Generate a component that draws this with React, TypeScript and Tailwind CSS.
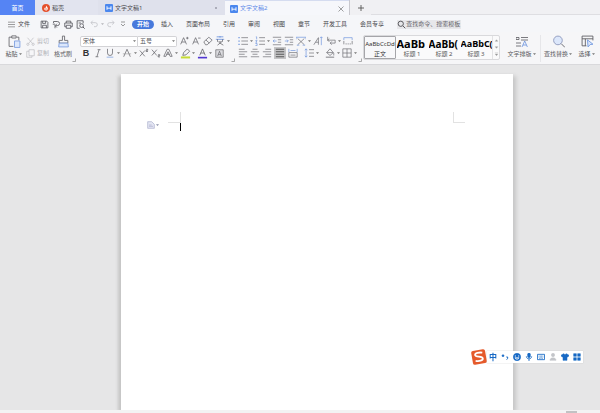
import type { ReactNode } from "react";

function Icon({ children, className = "size-[12px]" }: { children: ReactNode; className?: string }) {
  return (
    <svg
      viewBox="0 0 12 12"
      className={`block shrink-0 ${className}`}
      fill="none"
      stroke="currentColor"
      strokeWidth="0.8"
      aria-hidden="true"
    >
      {children}
    </svg>
  );
}

function Tool({ label, children, active = false }: { label: string; children: ReactNode; active?: boolean }) {
  return (
    <button
      type="button"
      aria-label={label}
      className={`flex size-[12px] shrink-0 items-center justify-center ${active ? "bg-[#c4c4c6]" : ""}`}
    >
      {children}
    </button>
  );
}

function Caret({ className = "text-[#777]" }: { className?: string }) {
  return (
    <svg viewBox="0 0 5 12" className={`block h-[12px] w-[5px] shrink-0 ${className}`} fill="currentColor" aria-hidden="true">
      <path d="M1 5.3h3L2.5 7z" />
    </svg>
  );
}

function Launcher() {
  return (
    <svg viewBox="0 0 4 4" className="block size-[4px] shrink-0 self-end text-[#888]" stroke="currentColor" strokeWidth="0.7" fill="none" aria-hidden="true">
      <path d="M0.5 3.5h3v-3" />
    </svg>
  );
}

function DocLogo() {
  return (
    <svg viewBox="0 0 8 8" className="block size-[8px] shrink-0" aria-hidden="true">
      <rect width="8" height="8" rx="1" fill="#4a87ee" />
      <path d="M2 2.2v3.6M6 2.2v3.6M2 4.2h4" stroke="#fff" strokeWidth="0.9" fill="none" />
    </svg>
  );
}

function TabBar() {
  return (
    <nav className="flex h-[15px] items-stretch bg-[#f0f0f3] text-[#4c4c50]">
      <button type="button" className="w-[35px] bg-[#5584f4] pt-px text-white">首页</button>
      <button type="button" className="flex w-[63px] items-center gap-[2px] bg-[#e2e4ef] pt-px pl-[7px]">
        <svg viewBox="0 0 8 8" className="size-[8px]" aria-hidden="true">
          <circle cx="4" cy="4" r="4" fill="#e5502c" />
          <path d="M4.2 1.4c.2 1.3 1.8 1.7 1.6 3.3-.2 2.3-3.4 2.3-3.6.1L3 3.6l.7.5z" fill="#fff" />
          <circle cx="4" cy="5" r=".7" fill="#e5502c" />
        </svg>
        稻壳
      </button>
      <button type="button" className="flex w-[127px] items-center gap-[2px] bg-[#dfe1ec] pt-px pl-[7px]">
        <DocLogo />
        文字文稿1
        <span className="mr-[8px] ml-auto size-[2px] rounded-full bg-[#9a9aa8]" />
      </button>
      <div className="flex w-[124px] items-center gap-[2px] border-t border-[#d5dcf0] bg-[#f6f7fb] pt-px pl-[5px] text-[#5f8be8]">
        <DocLogo />
        文字文稿2
        <button type="button" aria-label="关闭" className="mr-[5px] ml-auto text-[#777]">
          <Icon className="size-[6px]"><path d="M1 1l10 10M11 1L1 11" strokeWidth="1.4" /></Icon>
        </button>
      </div>
      <button type="button" aria-label="新建" className="flex w-[22px] items-center justify-center border-l border-[#c8c8ce] pt-px text-[#555]">
        <Icon className="size-[6px]"><path d="M6 0v12M0 6h12" strokeWidth="1.8" /></Icon>
      </button>
      <span className="flex-1 border-b border-[#dedee2]" />
    </nav>
  );
}

const MENUS = ["插入", "页面布局", "引用", "审阅", "视图", "章节", "开发工具", "会员专享"];

function MenuBar() {
  return (
    <div className="flex h-[17px] items-center bg-[#f5f6f9] pt-px pl-[8px] text-[#48484c]">
      <button type="button" className="flex w-[30px] items-center gap-[3px]">
        <Icon className="size-[7px] text-[#777]"><path d="M0 2h12M0 6h12M0 10h12" strokeWidth="1.2" /></Icon>
        文件
      </button>
      <div className="flex w-[50px] items-center text-[#55555c]">
        <Tool label="保存">
          <Icon className="size-[9px]"><path d="M1.5 1.5h7.500l1.500 1.500v7.500h-9zM3.500 1.500v3h4v-3M3.500 10.500V7h5v3.500" strokeWidth="1.1" /></Icon>
        </Tool>
        <Tool label="输出">
          <Icon className="size-[9px]"><path d="M2 4V2h5a3 2.700 0 010 5.500H4.500M6.500 5L4 7.500 6.500 10M1 5.500h3M4 7.500V11" strokeWidth="1.100" /></Icon>
        </Tool>
        <Tool label="打印">
          <Icon className="size-[9px]"><path d="M3 4V1.500h6V4M3 9H1V4h10v5H9M3 7h6v4H3z" strokeWidth="1.100" /></Icon>
        </Tool>
        <Tool label="打印预览">
          <Icon className="size-[9px]"><path d="M5 11H1.500V1h8v3.500M3.500 4h3" strokeWidth="1.100" /><circle cx="7.500" cy="7.500" r="2.500" strokeWidth="1.100" /><path d="M9.300 9.300L11.500 11.500" strokeWidth="1.300" /></Icon>
        </Tool>
      </div>
      <div className="flex w-[44px] items-center text-[#c2c3c8]">
        <Tool label="撤销">
          <Icon className="size-[8px]"><path d="M4 1L1.500 4 4 7M1.500 4H8a3 3 0 010 6H6" strokeWidth="1.200" /></Icon>
        </Tool>
        <Caret className="text-[#b5b5ba]" />
        <Tool label="恢复">
          <Icon className="size-[8px]"><path d="M8 1l2.500 3L8 7M10.500 4H4a3 3 0 000 6h2" strokeWidth="1.200" /></Icon>
        </Tool>
        <button type="button" aria-label="自定义" className="ml-[2px] text-[#777]">
          <Icon className="size-[8px]"><path d="M3 3h6M3 6l3 3 3-3" strokeWidth="1.100" /></Icon>
        </button>
      </div>
      <button type="button" className="h-[9px] w-[22px] shrink-0 rounded-full bg-[#4779dc] font-bold text-white">开始</button>
      <div className="flex gap-[13px] pl-[7px]">
        {MENUS.map((m) => (
          <button key={m} type="button" className="whitespace-nowrap">{m}</button>
        ))}
      </div>
      <label className="ml-[13px] flex h-[9px] items-center bg-[#e7e7ea] text-[#55555a]">
        <Icon className="size-[9px]"><circle cx="5" cy="5" r="3.500" strokeWidth="1.300" /><path d="M8 8l3 3" strokeWidth="1.300" /></Icon>
        <input aria-label="搜索" placeholder="查找命令、搜索模板" className="w-[55px] outline-none placeholder:text-[#66666c]" />
      </label>
    </div>
  );
}

function BigTool({ label, icon, className, caret = true }: { label: string; icon: ReactNode; className: string; caret?: boolean }) {
  return (
    <button type="button" className={`flex shrink-0 flex-col items-center ${className}`}>
      <span className="flex h-[13px] items-center">{icon}</span>
      <span className="flex h-[12px] items-center whitespace-nowrap">
        {label}
        {caret && <Caret />}
      </span>
    </button>
  );
}

function Clipboard() {
  return (
    <div className="flex">
      <BigTool
        label="粘贴"
        className="w-[18px]"
        icon={
          <Icon className="size-[13px] text-[#66666c]">
            <path d="M4 2H1v8.500h4M8 2h2v3" /><path d="M3.500.8h4v2h-4z" fill="#f6f6f8" /><path d="M6 5.500h5v6H6z" fill="#dce7fb" stroke="#7d9fe0" />
          </Icon>
        }
      />
      <div className="ml-[3px] flex w-[28px] flex-col text-[#b3b3b8]">
        <button type="button" className="flex h-[12px] items-center gap-[2px]">
          <Icon className="size-[9px]"><path d="M2 1l6.500 7.500M10 1L3.500 8.500" /><circle cx="2.500" cy="9.700" r="1.500" /><circle cx="9.500" cy="9.700" r="1.500" /></Icon>
          剪切
        </button>
        <button type="button" className="flex h-[13px] items-center gap-[2px]">
          <Icon className="size-[9px]"><path d="M4 1h7v8H4z" /><path d="M4 3H1v8h7V9" /></Icon>
          复制
        </button>
      </div>
      <BigTool
        label="格式刷"
        caret={false}
        className="w-[18px]"
        icon={
          <Icon className="size-[13px] text-[#66666c]">
            <path d="M5 1h2v4h3v2.500H2V5h3z" /><path d="M2 7.500L1.500 11h9L10 7.500z" fill="#dce7fb" stroke="#7d9fe0" />
          </Icon>
        }
      />
      <Launcher />
    </div>
  );
}

function Combo({ label, value, className }: { label: string; value: string; className: string }) {
  return (
    <div className={`flex h-[11px] items-center border border-[#d3d3d6] bg-white ${className}`}>
      <select aria-label={label} className="h-full min-w-0 flex-1 appearance-none pl-[2px] outline-none">
        <option>{value}</option>
      </select>
      <Caret />
    </div>
  );
}

const LETTER_A = "M2 10L5.500 2 9 10M3.300 7.200h4.400";

function FontGroup() {
  return (
    <div className="flex w-[151px] flex-col text-[#55555a]">
      <div className="flex h-[12px] items-center">
        <Combo label="字体" value="宋体" className="w-[58px] rounded-l-[2px]" />
        <Combo label="字号" value="五号" className="w-[39px] rounded-r-[2px] border-l-0" />
        <div className="flex pl-[1px]">
          <Tool label="增大字号"><Icon className="size-[10px]"><path d={LETTER_A} /><path d="M8.500 2.500h3M10 1v3" /></Icon></Tool>
          <Tool label="减小字号"><Icon className="size-[10px]"><path d={LETTER_A} /><path d="M8.500 2.500h3" /></Icon></Tool>
          <Tool label="清除格式"><Icon className="size-[10px]"><path d="M1 7l6-5.500 4 3.500-6 5.500H3zM3.500 4.800l4 3.600" /></Icon></Tool>
          <Tool label="拼音指南"><Icon className="size-[10px]"><path d="M2 1h8M6 0v2M1 4h10" stroke="#6b93dd" strokeWidth="1" /><path d="M3 4v3M9 4v3M4 7h4L3 11M5 8l5 3" /></Icon></Tool>
          <Caret />
        </div>
      </div>
      <div className="flex h-[12px] items-center">
        <Tool label="加粗"><b className="font-['Liberation_Sans',sans-serif] text-[9px] leading-[12px] font-bold text-[#333]">B</b></Tool>
        <Tool label="倾斜"><Icon className="size-[10px]"><path d="M5.500 2h3.500M3 10.500h3.500M7.300 2L4.700 10.500" /></Icon></Tool>
        <Tool label="下划线"><Icon className="size-[10px]"><path d="M3 1v5a3 3 0 006 0V1" /><path d="M2 11h8" stroke="#6b93dd" /></Icon></Tool>
        <Caret />
        <Tool label="删除线"><Icon className="size-[10px]"><path d="M2 10.500L6 1.500l4 9" /><path d="M1 7h10" stroke="#888" strokeWidth=".6" /></Icon></Tool>
        <Caret />
        <Tool label="上标"><Icon className="size-[10px]"><path d="M1 3l6 7M7 3l-6 7M8.500 1.500h2v1.300h-2v1.400h2.300" /></Icon></Tool>
        <Tool label="下标"><Icon className="size-[10px]"><path d="M1 2l6 7M7 2L1 9M8.500 8h2v1.300h-2v1.400h2.300" /></Icon></Tool>
        <Tool label="文字效果"><Icon className="size-[10px]"><path d="M1 10L5 1.500h2L11 10H8.500L6 4.500 3.500 10zM4 7.500h4" /></Icon></Tool>
        <Caret />
        <Tool label="突出显示"><Icon className="size-[11px]"><path d="M3 8l1-3 4-4 2.500 2.500-4 4z" /><path d="M1 10.300h10" stroke="#c5dc35" strokeWidth="2.200" /></Icon></Tool>
        <Caret />
        <Tool label="字体颜色"><Icon className="size-[11px]"><path d="M3 8l3-7 3 7M4 5.500h4" /><path d="M1 10.500h10" stroke="#5036d0" strokeWidth="1.800" /></Icon></Tool>
        <Caret />
        <Tool label="字符底纹"><Icon className="size-[9px]"><path d="M1 1h10v10H1z" fill="#dcdce0" /><path d="M3.500 9.500L6 3l2.500 6.500M4.500 7.500h3" /></Icon></Tool>
      </div>
    </div>
  );
}

function ParagraphGroup() {
  return (
    <div className="flex w-[121px] flex-col text-[#66666c]">
      <div className="flex h-[12px] items-center">
        <Tool label="项目符号"><Icon className="size-[10px]"><path d="M4 2h8M4 6h8M4 10h8" /><path d="M.5 2H2M.5 6H2M.5 10H2" stroke="#6b93dd" strokeWidth="1.500" /></Icon></Tool>
        <Caret />
        <Tool label="编号"><Icon className="size-[10px]"><path d="M5 2h7M5 6h7M5 10h7" /><path d="M1 1h1v3M.5 5.500h2L1 7.500h1.500M.5 9h2v2.500h-2" stroke="#6b93dd" /></Icon></Tool>
        <Caret />
        <Tool label="减少缩进"><Icon className="size-[10px]"><path d="M1 1.500h10M7 4.500h4M7 7.500h4M1 10.500h10" /><path d="M5.500 6h-4M3 4.300L1.300 6 3 7.700" stroke="#6b93dd" /></Icon></Tool>
        <Tool label="增加缩进"><Icon className="size-[10px]"><path d="M1 1.500h10M7 4.500h4M7 7.500h4M1 10.500h10" /><path d="M1 6h4M3.500 4.300L5.200 6 3.500 7.700" stroke="#6b93dd" /></Icon></Tool>
        <Tool label="中文版式"><Icon className="size-[10px]"><path d="M2 3l8 7.500M10 3L2 10.500" /><path d="M0 4V1.500h12V4M1 11h3M8 11h3" stroke="#6b93dd" /></Icon></Tool>
        <Caret />
        <Tool label="文字方向"><Icon className="size-[10px]"><path d="M1 10.500L6.500 2v8.500M3 7.500h3.500" /><path d="M10 1v10M8.500 2.500L10 1l1.500 1.500" stroke="#6b93dd" /></Icon></Tool>
        <div className="ml-[1px]"><Tool label="显示标记"><Icon className="size-[10px]"><path d="M2 1v4h9v3.500H5M4 3l-2 2 2 2M7 6.500l-2 2 2 2" /></Icon></Tool></div>
        <Caret />
        <Tool label="标尺"><Icon className="size-[10px]"><path d="M1 5V2h10v3" stroke="#6b93dd" /><path d="M1 6v4M11 6v4M3 9.500h1.500M5.500 9.500H7M8 9.500h1.500" /></Icon></Tool>
      </div>
      <div className="flex h-[12px] items-center">
        <Tool label="左对齐"><Icon className="size-[10px]"><path d="M1 1.500h7M1 4.500h10M1 7.500h7M1 10.500h10" /></Icon></Tool>
        <Tool label="居中"><Icon className="size-[10px]"><path d="M3 1.500h6M1 4.500h10M3 7.500h6M1 10.500h10" /></Icon></Tool>
        <Tool label="右对齐"><Icon className="size-[10px]"><path d="M4 1.500h7M1 4.500h10M4 7.500h7M1 10.500h10" /></Icon></Tool>
        <div className="mx-[1px]"><Tool label="两端对齐" active><Icon className="size-[10px] text-[#444]"><path d="M1 1.500h10M1 4.500h10M1 7.500h10M1 10.500h10" strokeWidth="1" /></Icon></Tool></div>
        <Tool label="分散对齐"><Icon className="size-[10px]"><path d="M1 1v4M11 1v4M3 3h6" stroke="#6b93dd" /><path d="M1 5.500h10V11H1zM3 8.500h6" /></Icon></Tool>
        <div className="ml-[4px]"><Tool label="行距"><Icon className="size-[10px]"><path d="M6 2h6M6 6h6M6 10h6" /><path d="M2.500 1v10M1 2.700L2.500 1 4 2.700M1 9.300L2.500 11 4 9.300" stroke="#6b93dd" /></Icon></Tool></div>
        <Caret />
        <div className="ml-[4px]"><Tool label="底纹颜色"><Icon className="size-[10px]"><path d="M2 5.500L6 1l4 4.500-4 3.500zM2 5.500h8M10.500 6v3" /><path d="M1 11h10" strokeWidth="1" /></Icon></Tool></div>
        <Caret />
        <Tool label="边框"><Icon className="size-[10px]"><path d="M1 1h10v10H1zM6 1v10M1 6h10" /></Icon></Tool>
        <Caret />
      </div>
    </div>
  );
}

const HEADINGS = [
  { name: "标题 1", sample: "AaBb", size: "text-[11px]" },
  { name: "标题 2", sample: "AaBb(", size: "text-[10px]" },
  { name: "标题 3", sample: "AaBbC(", size: "text-[9px]" },
];

function StyleGallery() {
  return (
    <div className="flex h-[25px] w-[137px] shrink-0 rounded-[2px] border border-[#d9d9dc] bg-[#fafafb] text-[#333]">
      <button type="button" className="flex w-[32px] shrink-0 flex-col items-center rounded-[1px] border border-[#a5a5a9] bg-[#f8f8fa]">
        <span className="h-[13px] text-[6px] leading-[14px]">AaBbCcDd</span>
        <span className="leading-[9px]">正文</span>
      </button>
      {HEADINGS.map((h) => (
        <button key={h.name} type="button" className="flex w-[32px] shrink-0 flex-col items-center pt-[1px]">
          <span className={`h-[13px] w-[31px] overflow-hidden text-left font-['Open_Sans',sans-serif] leading-[14px] font-bold text-black ${h.size}`}>{h.sample}</span>
          <span className="leading-[9px] text-[#555]">{h.name}</span>
        </button>
      ))}
      <div className="flex flex-1 flex-col items-center justify-between border-l border-[#e2e2e4] py-[2px] text-[#999]">
        <Icon className="size-[5px]"><path d="M3 8l3-4 3 4z" fill="currentColor" /></Icon>
        <Icon className="size-[5px]"><path d="M3 4l3 4 3-4z" fill="currentColor" /></Icon>
        <Icon className="size-[5px]"><path d="M2 2h8M3 5l3 4 3-4z" fill="currentColor" /></Icon>
      </div>
    </div>
  );
}

function Ribbon() {
  return (
    <div className="flex h-[33px] border-b border-[#d9d9dc] bg-[#f6f6f8] pt-[3px] pb-[2px] pl-[5px] text-[#5a5a60]">
      <Clipboard />
      <div className="ml-[4px] flex"><FontGroup /><Launcher /></div>
      <div className="ml-[2px] flex"><ParagraphGroup /><Launcher /></div>
      <div className="ml-[1px] flex"><StyleGallery /></div>
      <BigTool
        label="文字排版"
        className="ml-[7px] w-[30px]"
        icon={
          <Icon className="size-[12px]">
            <path d="M0 1.500h3v2H0zM5 1.500h7M5 4h7M0 7h5M0 10h5" /><path d="M6 11l2.700-6 2.700 6M7 9h3.500" stroke="#6b93dd" />
          </Icon>
        }
      />
      <BigTool
        label="查找替换"
        className="ml-[3px] w-[36px] border-l border-[#e6e6e9]"
        icon={
          <Icon className="size-[13px]">
            <circle cx="5.500" cy="5" r="4" fill="#dce7fb" stroke="#8a94b8" /><path d="M8.500 8L12 11.500" />
          </Icon>
        }
      />
      <BigTool
        label="选择"
        className="ml-[1px] w-[20px]"
        icon={
          <Icon className="size-[13px]">
            <path d="M5 10H1V1h10v4M1 3.500h10M4 3.500V10" /><path d="M6 4.500l5 4-2.500.3L6.500 11z" fill="#dce7fb" stroke="#6b93dd" />
          </Icon>
        }
      />
    </div>
  );
}

function Page() {
  return (
    <section className="mt-[9px] mr-[87px] ml-[121px] flex-1 bg-white pt-[38px] shadow-[-3px_2px_3px_#c6c6c6,3px_2px_4px_#c6c6c6]">
      <div className="flex items-start justify-between pr-[48px] pl-[26px]">
        <div className="flex items-end">
          <button type="button" aria-label="粘贴选项" className="flex items-center text-[#a9aecb]">
            <Icon className="size-[8px]"><path d="M1 1h6l4 4v6H1z" fill="#e4e6f3" strokeWidth="1" /><path d="M3 6h4M3 8h6" strokeWidth="1" /></Icon>
            <Caret className="text-[#8a8fa8]" />
          </button>
          <div className="ml-[8px] flex flex-col">
            <span className="h-[11px] w-[13px] border-r border-b border-[#e2e2e2]" />
            <span className="ml-[12px] h-[8px] w-px bg-black" />
          </div>
        </div>
        <span className="h-[11px] w-[12px] border-b border-l border-[#e2e2e2]" />
      </div>
    </section>
  );
}

function ImeBar() {
  return (
    <div className="fixed right-[17px] bottom-[48px] flex items-center text-[#1769c5]">
      <svg viewBox="0 0 16 16" className="size-[16px]" aria-hidden="true">
        <g transform="rotate(-10 8 8)">
          <rect x="1" y="1" width="14" height="14" rx="2" fill="#e55a2b" />
          <path d="M12 4.300C9 3.300 4.500 3.200 4.500 5.500S11.500 7.500 11.500 10 7 12.300 4 11.200" fill="none" stroke="#fff" strokeWidth="1.800" />
        </g>
      </svg>
      <div className="flex h-[12px] items-center bg-white shadow-[0_0_1px_#bbb]">
        <button type="button" className="w-[12px] text-[8px] leading-[12px] font-bold">中</button>
        <Tool label="标点"><Icon className="size-[8px]"><circle cx="3" cy="4" r="1.500" fill="currentColor" /><path d="M8 6h2v2L8.500 10" strokeWidth="1.500" /></Icon></Tool>
        <Tool label="表情"><Icon className="size-[8px]"><circle cx="6" cy="6" r="5.500" fill="currentColor" /><path d="M3.500 3.500v2M8.500 3.500v2M3 7.200c1 2.800 5 2.800 6 0z" stroke="#fff" strokeWidth="1.200" /></Icon></Tool>
        <Tool label="语音"><Icon className="size-[8px]"><rect x="4" y="0" width="4" height="7" rx="2" fill="currentColor" /><path d="M2 5c0 5 8 5 8 0M6 9v3" strokeWidth="1.300" /></Icon></Tool>
        <Tool label="键盘"><Icon className="size-[8px]"><path d="M.7 2h10.600v8H.7z" strokeWidth="1.300" /><path d="M2.500 4.500h7M2.500 6.300h7M3.500 8.300h5" strokeDasharray="1.200 .7" strokeWidth="1.100" /></Icon></Tool>
        <span className="text-[#c3c5c9]"><Tool label="账号"><Icon className="size-[8px]"><circle cx="6" cy="3" r="2.500" fill="currentColor" /><path d="M1.500 11c0-5 9-5 9 0z" fill="currentColor" /></Icon></Tool></span>
        <Tool label="皮肤"><Icon className="size-[8px]"><path d="M4 1L0 3.500 1.500 6 3 5.500V11h6V5.500l1.500.5L12 3.500 8 1C7.500 2.500 4.500 2.500 4 1z" fill="currentColor" /></Icon></Tool>
        <Tool label="工具箱"><Icon className="size-[8px]"><path d="M1 1h4v4H1zM7 1h4v4H7zM1 7h4v4H1zM7 7h4v4H7z" fill="currentColor" /></Icon></Tool>
      </div>
    </div>
  );
}

export default function App() {
  return (
    <div
      lang="zh-CN"
      className="flex min-h-screen flex-col bg-[#e6e6e7] font-['Noto_Sans','Noto_Sans_CJK_SC',sans-serif] text-[6px] leading-[9px]"
    >
      <header>
        <TabBar />
        <MenuBar />
        <Ribbon />
      </header>
      <main className="flex flex-1 flex-col overflow-hidden">
        <Page />
      </main>
      <footer className="flex h-[3px] items-end justify-end bg-[#f3f3f4] pr-[23px]">
        <span className="h-[2px] w-[11px] bg-[#c2c2c4]" />
      </footer>
      <ImeBar />
    </div>
  );
}
